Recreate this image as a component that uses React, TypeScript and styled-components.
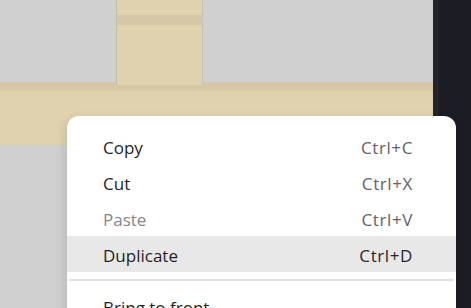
import { FC } from "react";
import styled, { createGlobalStyle } from "styled-components";

const GlobalStyle = createGlobalStyle`
    html, body {
        margin: 0;
        padding: 0;
        width: 471px;
        height: 308px;
        overflow: hidden;
    }
    #root {
        height: 308px;
    }
`

interface IMenuItem {
    label: string
    shortcut: string
    disabled?: boolean
    active?: boolean
}

const items: IMenuItem[] = [
    { label: "Copy", shortcut: "Ctrl+C" },
    { label: "Cut", shortcut: "Ctrl+X" },
    { label: "Paste", shortcut: "Ctrl+V", disabled: true },
    { label: "Duplicate", shortcut: "Ctrl+D", active: true },
]

const App: FC = () => {
    return (
        <Page>
            <GlobalStyle />
            <Canvas>
                <TopRow>
                    <GrayCell $width={117} />
                    <Pillar>
                        <PillarStripe />
                    </Pillar>
                    <GrayCell />
                </TopRow>
                <Beam />
                <GrayCell />
            </Canvas>
            <Sidebar />
            <Menu>
                {items.map(item => (
                    <Item key={item.label} $active={item.active}>
                        <Label $disabled={item.disabled}>{item.label}</Label>
                        <Shortcut $active={item.active}>{item.shortcut}</Shortcut>
                    </Item>
                ))}
                <Separator />
                <Item>
                    <Label>Bring to front</Label>
                </Item>
            </Menu>
        </Page>
    )
}

export default App


const Page = styled.div`
    position: relative;
    display: flex;
    width: 471px;
    height: 308px;
    overflow: hidden;
    font-family: "Open Sans", "Noto Sans", sans-serif;
`

const Canvas = styled.div`
    flex: 1;
    display: flex;
    flex-direction: column;
    background: #d0d0d0;
`

const TopRow = styled.div`
    display: flex;
    height: 82px;
`

const GrayCell = styled.div<{$width?: number}>`
    background: #d0d0d0;
    flex: ${props => props.$width ? `0 0 ${props.$width}px` : "1"};
`

const Pillar = styled.div`
    flex: 0 0 85px;
    background: #e0d2af;
    padding-top: 15px;
    box-shadow: -1px 0 0 #c2bcae, 1px 0 0 #c6c2b8;
    margin-bottom: -3px;
    position: relative;
    z-index: 1;
`

const PillarStripe = styled.div`
    height: 10px;
    background: #d6c7a6;
`

const Beam = styled.div`
    height: 63px;
    background: linear-gradient(#d5c6a5 0, #d5c6a5 7px, #dccdab 9px, #e0d2af 11px);
`

const Sidebar = styled.div`
    flex: 0 0 38px;
    background: #1c1c24;
    border-left: 6px solid #24242c;
    box-sizing: border-box;
`

const Menu = styled.div`
    position: absolute;
    left: 67px;
    top: 116px;
    width: 389px;
    height: 220px;
    box-sizing: border-box;
    padding: 12px 0;
    background: #ffffff;
    border-radius: 12px;
    box-shadow: -2px 4px 12px rgba(0, 0, 0, 0.12);
    z-index: 2;
`

const Item = styled.div<{$active?: boolean}>`
    display: flex;
    align-items: center;
    justify-content: space-between;
    height: 36px;
    padding: 2px 43px 0 36px;
    box-sizing: border-box;
    background: ${props => props.$active ? "#e8e8e8" : "transparent"};
    font-size: 17px;
`

const Label = styled.span<{$disabled?: boolean}>`
    color: ${props => props.$disabled ? "#85858c" : "#1f1f24"};
`

const Shortcut = styled.span<{$active?: boolean}>`
    letter-spacing: 0.6px;
    color: ${props => props.$active ? "#26262c" : "#66606a"};
`

const Separator = styled.div`
    height: 2px;
    margin: 7px 2px;
    background: #e2e2e2;
`
